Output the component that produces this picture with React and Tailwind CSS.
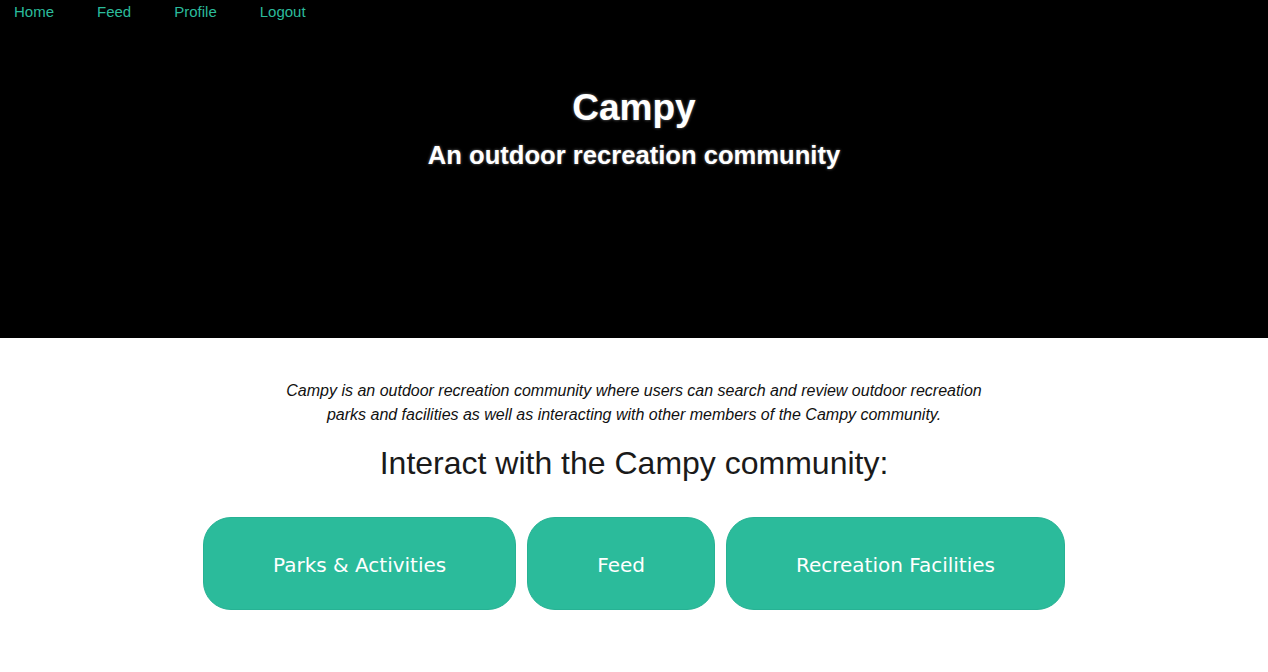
export default function App() {
  const font = { fontFamily: '"Liberation Sans", Arial, sans-serif' };
  return (
    <div className="min-h-[672px] bg-white" style={font}>
      <header className="bg-black h-[338px] flex flex-col">
        <nav className="flex gap-[43px] pl-[14px] h-[24px] items-center text-[15px] text-[#2bbb9b]">
          <a href="#">Home</a>
          <a href="#">Feed</a>
          <a href="#">Profile</a>
          <a href="#">Logout</a>
        </nav>
        <div className="flex flex-col items-center pt-[63px] text-white">
          <h1 className="text-[37px] leading-[42px] font-bold [text-shadow:0_0_3px_#777]">Campy</h1>
          <h2 className="text-[25.6px] leading-[30px] font-bold mt-[11px] [text-shadow:0_0_3px_#777]">An outdoor recreation community</h2>
        </div>
      </header>
      <main className="flex flex-col items-center">
        <p className="max-w-[700px] text-center italic text-[16px] leading-[24px] text-[#111] mt-[41px]">
          Campy is an outdoor recreation community where users can search and review outdoor recreation parks and facilities as well as interacting with other members of the Campy community.
        </p>
        <h3 className="text-[32px] leading-[37px] text-[#1a1a1a] mt-[18px]">Interact with the Campy community:</h3>
        <div className="flex gap-[11px] mt-[35px]" style={{ fontFamily: '"DejaVu Sans", Verdana, sans-serif' }}>
          {["Parks & Activities", "Feed", "Recreation Facilities"].map((t) => (
            <button key={t} className="h-[93px] px-[69px] rounded-[28px] bg-[#2bbb9b] text-white text-[20px] leading-[26px] pt-[2px] border border-[#27b294]">
              {t}
            </button>
          ))}
        </div>
      </main>
    </div>
  );
}
